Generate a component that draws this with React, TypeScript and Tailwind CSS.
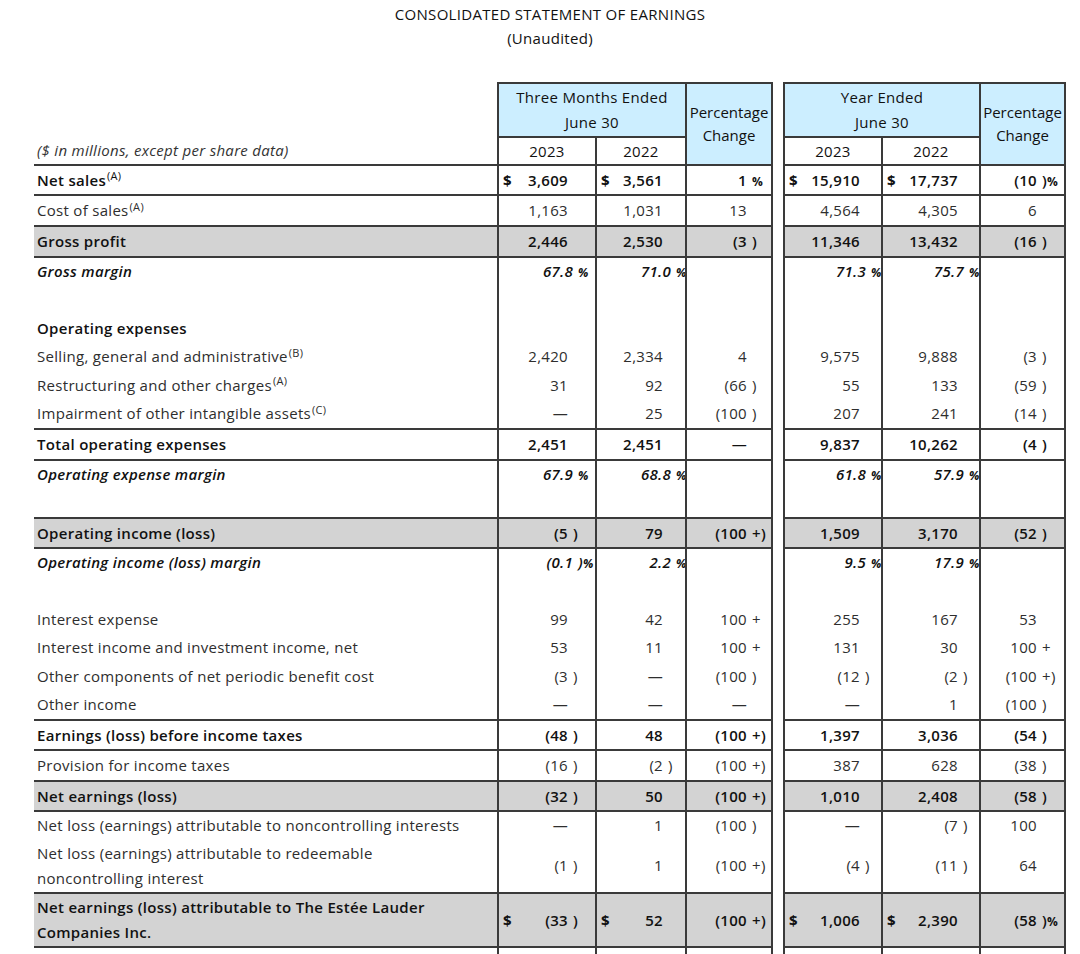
import React from 'react';

type Kind = 'bold' | 'reg' | 'ital';

type Row = {
  label?: React.ReactNode;
  sup?: string;
  v?: string[];
  k: Kind;
  gray?: boolean;
  top?: boolean;
  h: string;
};

const cols = 'grid grid-cols-[463px_98px_90px_88px_10px_98px_98px_87px]';
const line = 'border-[#3a3a3a]';
const edges = ['border-l-2', 'border-l-2', 'border-x-2', 'border-l-2', 'border-l-2', 'border-x-2'];
const sufReg = ['w-[27px]', 'w-[22px]', 'w-[24px]', 'w-[21px]', 'w-[21px]', 'w-[27px]'];
const sufItal = ['w-[22px]', 'w-[14px]', 'w-[24px]', 'w-[15px]', 'w-[15px]', 'w-[27px]'];

const rows: Row[] = [
  { label: 'Net sales', sup: '(A)', k: 'bold', top: true, h: 'h-[30px]', v: ['$ 3,609', '$ 3,561', '1 %', '$ 15,910', '$ 17,737', '(10 )%'] },
  { label: 'Cost of sales', sup: '(A)', k: 'reg', top: true, h: 'h-[31px]', v: ['1,163', '1,031', '13', '4,564', '4,305', '6'] },
  { label: 'Gross profit', k: 'bold', gray: true, top: true, h: 'h-[31px]', v: ['2,446', '2,530', '(3 )', '11,346', '13,432', '(16 )'] },
  { label: 'Gross margin', k: 'ital', top: true, h: 'h-[29px]', v: ['67.8 %', '71.0 %', '', '71.3 %', '75.7 %', ''] },
  { k: 'reg', h: 'h-[29px]' },
  { label: 'Operating expenses', k: 'bold', h: 'h-[28px]' },
  { label: 'Selling, general and administrative', sup: '(B)', k: 'reg', h: 'h-[29px]', v: ['2,420', '2,334', '4', '9,575', '9,888', '(3 )'] },
  { label: 'Restructuring and other charges', sup: '(A)', k: 'reg', h: 'h-[28px]', v: ['31', '92', '(66 )', '55', '133', '(59 )'] },
  { label: 'Impairment of other intangible assets', sup: '(C)', k: 'reg', h: 'h-[29px]', v: ['—', '25', '(100 )', '207', '241', '(14 )'] },
  { label: 'Total operating expenses', k: 'bold', top: true, h: 'h-[31px]', v: ['2,451', '2,451', '—', '9,837', '10,262', '(4 )'] },
  { label: 'Operating expense margin', k: 'ital', top: true, h: 'h-[29px]', v: ['67.9 %', '68.8 %', '', '61.8 %', '57.9 %', ''] },
  { k: 'reg', h: 'h-[29px]' },
  { label: 'Operating income (loss)', k: 'bold', gray: true, top: true, h: 'h-[30px]', v: ['(5 )', '79', '(100 +)', '1,509', '3,170', '(52 )'] },
  { label: 'Operating income (loss) margin', k: 'ital', top: true, h: 'h-[29px]', v: ['(0.1 )%', '2.2 %', '', '9.5 %', '17.9 %', ''] },
  { k: 'reg', h: 'h-[29px]' },
  { label: 'Interest expense', k: 'reg', h: 'h-[28px]', v: ['99', '42', '100 +', '255', '167', '53'] },
  { label: 'Interest income and investment income, net', k: 'reg', h: 'h-[29px]', v: ['53', '11', '100 +', '131', '30', '100 +'] },
  { label: 'Other components of net periodic benefit cost', k: 'reg', h: 'h-[28px]', v: ['(3 )', '—', '(100 )', '(12 )', '(2 )', '(100 +)'] },
  { label: 'Other income', k: 'reg', h: 'h-[29px]', v: ['—', '—', '—', '—', '1', '(100 )'] },
  { label: 'Earnings (loss) before income taxes', k: 'bold', top: true, h: 'h-[30px]', v: ['(48 )', '48', '(100 +)', '1,397', '3,036', '(54 )'] },
  { label: 'Provision for income taxes', k: 'reg', top: true, h: 'h-[31px]', v: ['(16 )', '(2 )', '(100 +)', '387', '628', '(38 )'] },
  { label: 'Net earnings (loss)', k: 'bold', gray: true, top: true, h: 'h-[30px]', v: ['(32 )', '50', '(100 +)', '1,010', '2,408', '(58 )'] },
  { label: 'Net loss (earnings) attributable to noncontrolling interests', k: 'reg', top: true, h: 'h-[29px]', v: ['—', '1', '(100 )', '—', '(7 )', '100'] },
  {
    label: (
      <>
        Net loss (earnings) attributable to redeemable
        <br />
        noncontrolling interest
      </>
    ),
    k: 'reg',
    h: 'h-[53px]',
    v: ['(1 )', '1', '(100 +)', '(4 )', '(11 )', '64'],
  },
  {
    label: (
      <>
        Net earnings (loss) attributable to The Estée Lauder
        <br />
        Companies Inc.
      </>
    ),
    k: 'bold',
    gray: true,
    top: true,
    h: 'h-[54px]',
    v: ['$ (33 )', '$ 52', '(100 +)', '$ 1,006', '$ 2,390', '(58 )%'],
  },
  { k: 'reg', top: true, h: 'h-[30px]' },
];

const kindText: Record<Kind, string> = {
  bold: 'font-semibold text-[#111]',
  reg: 'text-[#2e2e2e]',
  ital: 'italic font-semibold text-[#111]',
};

const Suffix = ({ s }: { s: string }) => (
  <>
    {s.split('').map((c, i) =>
      c === '%' ? (
        <span key={i} className="text-[12px] font-bold">
          %
        </span>
      ) : (
        <span key={i}>{c}</span>
      )
    )}
  </>
);

const Value = ({ text, i, k }: { text: string; i: number; k: Kind }) => {
  let t = text;
  let dollar = false;
  if (t.startsWith('$ ')) {
    dollar = true;
    t = t.slice(2);
  }
  const sp = t.lastIndexOf(' ');
  const num = sp >= 0 ? t.slice(0, sp) : t;
  const suf = sp >= 0 ? t.slice(sp + 1) : '';
  const sw = k === 'ital' ? sufItal[i] : sufReg[i];
  return (
    <div className="flex h-full items-center">
      {dollar && <span className="pl-[4px] font-bold">$</span>}
      <span className="ml-auto whitespace-nowrap">{num}</span>
      <span className={`${sw} shrink-0 whitespace-nowrap pl-[5px]`}>
        <Suffix s={suf} />
      </span>
    </div>
  );
};

const DataRow = ({ row }: { row: Row }) => {
  const bg = row.gray ? 'bg-[#d3d3d3]' : '';
  const top = row.top ? 'border-t-2' : '';
  return (
    <div className={`${cols} ${row.h} ${kindText[row.k]}`}>
      <div className={`flex items-center pl-[3px] leading-[25px] ${line} ${top} ${bg}`}>
        <span>
          {row.label}
          {row.sup && <sup className="ml-[1px] text-[11px] font-normal">{row.sup}</sup>}
        </span>
      </div>
      {[0, 1, 2, 3, 4, 5].map((i) => (
        <React.Fragment key={i}>
          {i === 3 && <div />}
          <div className={`${edges[i]} ${line} ${top} ${bg}`}>
            {row.v && row.v[i] && <Value text={row.v[i]} i={i} k={row.k} />}
          </div>
        </React.Fragment>
      ))}
    </div>
  );
};

const Header = () => (
  <div className={`${cols} grid-rows-[54px_28px] font-medium text-[#111]`}>
    <div className="col-start-1 row-start-2 flex items-center pl-[3px] italic text-[#333] font-normal">
      ($ in millions, except per share data)
    </div>
    <div className={`col-span-2 col-start-2 row-start-1 flex flex-col items-center justify-center border-l-2 border-t-2 bg-[#cceeff] leading-[25px] ${line}`}>
      <span>Three Months Ended</span>
      <span>June 30</span>
    </div>
    <div className={`col-start-2 row-start-2 flex items-center justify-center border-l-2 border-t-2 ${line}`}>2023</div>
    <div className={`col-start-3 row-start-2 flex items-center justify-center border-l-2 border-t-2 ${line}`}>2022</div>
    <div className={`col-start-4 row-span-2 row-start-1 flex flex-col items-center justify-center border-x-2 border-t-2 bg-[#cceeff] leading-[23px] tracking-normal ${line}`}>
      <span>Percentage</span>
      <span>Change</span>
    </div>
    <div className={`col-span-2 col-start-6 row-start-1 flex flex-col items-center justify-center border-l-2 border-t-2 bg-[#cceeff] leading-[25px] ${line}`}>
      <span>Year Ended</span>
      <span>June 30</span>
    </div>
    <div className={`col-start-6 row-start-2 flex items-center justify-center border-l-2 border-t-2 ${line}`}>2023</div>
    <div className={`col-start-7 row-start-2 flex items-center justify-center border-l-2 border-t-2 ${line}`}>2022</div>
    <div className={`col-start-8 row-span-2 row-start-1 flex flex-col items-center justify-center border-x-2 border-t-2 bg-[#cceeff] leading-[23px] tracking-normal ${line}`}>
      <span>Percentage</span>
      <span>Change</span>
    </div>
  </div>
);

export default function App() {
  return (
    <div className="min-h-screen w-[1080px] bg-white pt-[2px] text-[15px] tracking-[0.3px] font-['Open_Sans',sans-serif]">
      <div className="ml-[34px] w-[1032px]">
        <div className="text-center leading-6 font-medium text-[#111]">
          <div>CONSOLIDATED STATEMENT OF EARNINGS</div>
          <div>(Unaudited)</div>
        </div>
        <div className="mt-[32px]">
          <Header />
          {rows.map((r, i) => (
            <DataRow key={i} row={r} />
          ))}
        </div>
      </div>
    </div>
  );
}
